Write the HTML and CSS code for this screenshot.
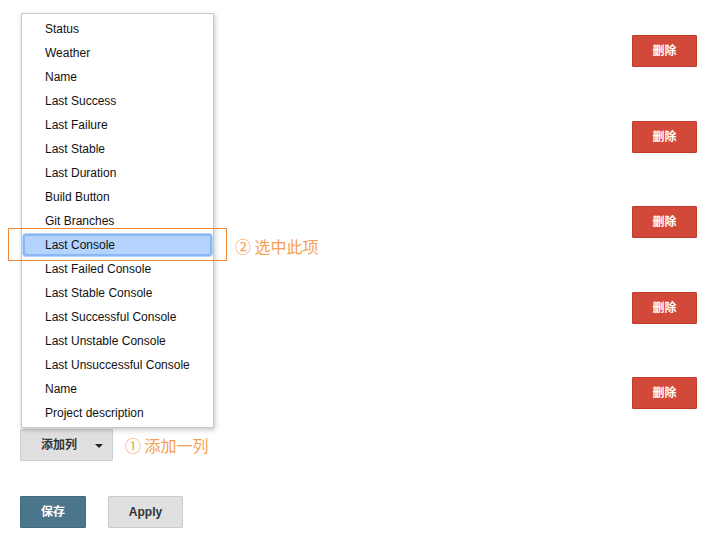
FILE: index.html
```html
<!DOCTYPE html>
<html lang="zh">
<head>
<meta charset="utf-8">
<link rel="stylesheet" href="styles.css">
</head>
<body>
<div class="page">
  <div class="rows">
    <div class="row"><button class="btn-delete">删除</button></div>
    <div class="row"><button class="btn-delete">删除</button></div>
    <div class="row"><button class="btn-delete">删除</button></div>
    <div class="row"><button class="btn-delete">删除</button></div>
    <div class="row"><button class="btn-delete">删除</button></div>
  </div>

  <div class="add-row">
    <button class="btn-add"><span class="add-label">添加列</span><span class="caret"></span></button>
    <span class="note">① 添加一列</span>
  </div>

  <div class="actions">
    <button class="btn-save">保存</button>
    <button class="btn-apply">Apply</button>
  </div>

  <ul class="menu">
    <li class="item">Status</li>
    <li class="item">Weather</li>
    <li class="item">Name</li>
    <li class="item">Last Success</li>
    <li class="item">Last Failure</li>
    <li class="item">Last Stable</li>
    <li class="item">Last Duration</li>
    <li class="item">Build Button</li>
    <li class="item">Git Branches</li>
    <li class="item selected">Last Console</li>
    <li class="item">Last Failed Console</li>
    <li class="item">Last Stable Console</li>
    <li class="item">Last Successful Console</li>
    <li class="item">Last Unstable Console</li>
    <li class="item">Last Unsuccessful Console</li>
    <li class="item">Name</li>
    <li class="item">Project description</li>
  </ul>

  <div class="callout-box"></div>
  <span class="note callout-text">② 选中此项</span>
</div>
</body>
</html>
```

FILE: styles.css
```css
* { box-sizing: border-box; }

html, body {
  margin: 0;
  padding: 0;
  background: #ffffff;
}

body {
  font-family: "Liberation Sans", Arial, "Noto Sans CJK SC", sans-serif;
  font-size: 12px;
  color: #111;
}

.page {
  position: relative;
  width: 710px;
  height: 535px;
  padding: 35px 13px 0 20px;
}

button {
  font-family: "Liberation Sans", Arial, "Noto Sans CJK SC", sans-serif;
  font-size: 12px;
  font-weight: bold;
  line-height: 14px;
  margin: 0;
  cursor: pointer;
}

.rows {
  display: flex;
  flex-direction: column;
  gap: 53.5px;
}

.row {
  display: flex;
  justify-content: flex-end;
  height: 32px;
}

.btn-delete {
  width: 65px;
  height: 32px;
  background: #d24939;
  border: 1px solid #bf3b2c;
  border-radius: 1px;
  color: #fff;
  padding: 0;
}

.add-row {
  display: flex;
  align-items: center;
  margin-top: 20px;
  height: 32px;
}

.btn-add {
  width: 93px;
  height: 32px;
  background: #e0e0e0;
  border: 1px solid #cfcfcf;
  border-radius: 1px;
  color: #333;
  padding: 0 10px 0 20px;
  display: flex;
  align-items: center;
  justify-content: space-between;
}

.caret {
  width: 0;
  height: 0;
  border-left: 4px solid transparent;
  border-right: 4px solid transparent;
  border-top: 4px solid #222;
  margin-top: 1px;
  margin-right: -1px;
}

.note {
  font-family: "Noto Sans CJK SC", sans-serif;
  font-size: 16px;
  line-height: 20px;
  color: #f6a04f;
}

.add-row .note {
  margin-left: 12px;
}

.actions {
  display: flex;
  gap: 22px;
  margin-top: 35px;
}

.btn-save {
  width: 66px;
  height: 32px;
  background: #4b758b;
  border: 1px solid #436b80;
  border-radius: 1px;
  color: #fff;
  padding: 0;
}

.btn-apply {
  width: 75px;
  height: 32px;
  background: #e0e0e0;
  border: 1px solid #cbcbcb;
  border-radius: 1px;
  color: #333;
  padding: 0;
}

/* dropdown menu overlay */
.menu {
  position: absolute;
  left: 21px;
  top: 13px;
  width: 193px;
  margin: 0;
  padding: 3px 0 2px;
  list-style: none;
  background: #fff;
  border: 1px solid #c8c8c8;
  box-shadow: 1px 2px 5px rgba(0, 0, 0, 0.22);
}

.item {
  height: 24px;
  line-height: 24px;
  padding-left: 23px;
  color: #111;
  white-space: nowrap;
}

.item.selected {
  background: #b4d4fd;
  outline: 2px solid #8cb6f4;
  outline-offset: -3px;
  border-radius: 4px;
}

.callout-box {
  position: absolute;
  left: 8px;
  top: 228px;
  width: 219px;
  height: 33px;
  border: 1px solid #f0883a;
}

.callout-text {
  position: absolute;
  left: 235px;
  top: 236px;
}
```
